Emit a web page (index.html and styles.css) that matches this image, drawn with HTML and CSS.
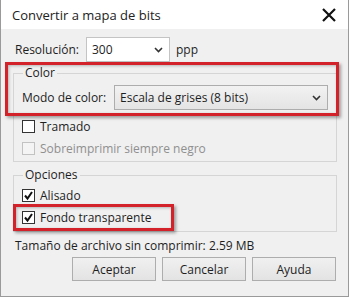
FILE: index.html
```html
<!DOCTYPE html>
<html>
    <head>
        <meta charset="utf-8">
        <link rel="stylesheet" href="styles.css">
    </head>
    <body>
        <div class="window">
            <header class="titlebar">
                <span class="title">Convertir a mapa de bits</span>
                <svg class="close" width="14" height="14" viewBox="0 0 14 14">
                    <path d="M1 1 L13 13 M13 1 L1 13" stroke="#111" stroke-width="2.2" fill="none"/>
                </svg>
            </header>

            <div class="content">
                <div class="res-row">
                    <span class="label">Resolución:</span>
                    <div class="combo combo-res">
                        <span>300</span>
                        <svg class="chev" width="9" height="6" viewBox="0 0 9 6"><path d="M1 1 L4.5 4.5 L8 1" stroke="#333" stroke-width="1.6" fill="none"/></svg>
                    </div>
                    <span class="unit">ppp</span>
                </div>

                <fieldset class="group group-color">
                    <legend>Color</legend>
                    <div class="mode-row">
                        <span class="label">Modo de color:</span>
                        <div class="combo combo-mode">
                            <span>Escala de grises (8 bits)</span>
                            <svg class="chev" width="9" height="6" viewBox="0 0 9 6"><path d="M1 1 L4.5 4.5 L8 1" stroke="#333" stroke-width="1.6" fill="none"/></svg>
                        </div>
                    </div>
                    <div class="check-row">
                        <span class="box"></span>
                        <span>Tramado</span>
                    </div>
                    <div class="check-row disabled">
                        <span class="box"></span>
                        <span>Sobreimprimir siempre negro</span>
                    </div>
                </fieldset>

                <fieldset class="group group-options">
                    <legend>Opciones</legend>
                    <div class="check-row">
                        <span class="box checked"><svg width="11" height="11" viewBox="0 0 11 11"><path d="M2 5.5 L4.5 8.5 L9 2" stroke="#111" stroke-width="2" fill="none"/></svg></span>
                        <span>Alisado</span>
                    </div>
                    <div class="check-row">
                        <span class="box checked"><svg width="11" height="11" viewBox="0 0 11 11"><path d="M2 5.5 L4.5 8.5 L9 2" stroke="#111" stroke-width="2" fill="none"/></svg></span>
                        <span>Fondo transparente</span>
                    </div>
                </fieldset>

                <p class="size-info">Tamaño de archivo sin comprimir: 2.59 MB</p>

                <div class="buttons">
                    <button>Aceptar</button>
                    <button>Cancelar</button>
                    <button>Ayuda</button>
                </div>
            </div>

            <!-- red highlight marks -->
            <div class="mark mark-color"></div>
            <div class="mark mark-bg"></div>
        </div>
    </body>
</html>
```

FILE: styles.css
```css
body {
    margin: 0;
    background: #fff;
    font-family: "Open Sans", "Noto Sans", sans-serif;
    font-size: 12px;
    color: #1e1e1e;
}
.window {
    position: relative;
    box-sizing: border-box;
    width: 349px;
    height: 297px;
    border: 1px solid #9a9a9a;
    border-top: none;
    background: #f0f0f0;
}
.titlebar {
    display: flex;
    justify-content: space-between;
    align-items: center;
    height: 29px;
    padding: 0 11px 0 11px;
    background: #fff;
}
.title {
    font-size: 13px;
    color: #222;
    padding-top: 1px;
}
.close {
    margin-right: 1px;
    margin-top: 1px;
}
.content {
    padding-top: 8px;
}
.res-row {
    display: flex;
    align-items: center;
    height: 25px;
    padding-left: 14px;
}
.res-row .label {
    width: 71px;
}
.combo {
    box-sizing: border-box;
    display: flex;
    justify-content: space-between;
    align-items: center;
    height: 25px;
    border: 1px solid #adadad;
    padding: 0 6px 0 5px;
}
.combo-res {
    width: 84px;
    background: #fff;
    border-color: #c4c4c4;
}
.unit {
    margin-left: 6px;
}
.group {
    margin: 3px 11px 0 12px;
    border: 1px solid #d5d5d5;
    padding: 0 8px 2px 8px;
}
.group legend {
    padding: 0 2px;
    margin-left: 1px;
    line-height: 16px;
}
.group-color {
    padding-top: 0;
}
.mode-row {
    display: flex;
    align-items: center;
    margin: 4px 0 5px 0;
}
.mode-row .label {
    width: 92px;
}
.combo-mode {
    flex: 1;
    background: linear-gradient(#f2f2f2, #e4e4e4);
}
.check-row {
    display: flex;
    align-items: center;
    height: 22px;
}
.box {
    box-sizing: border-box;
    display: flex;
    align-items: center;
    justify-content: center;
    width: 13px;
    height: 13px;
    border: 1px solid #333;
    background: #fff;
    margin-right: 5px;
}
.disabled {
    color: #8f8f8f;
}
.disabled .box {
    border-color: #c2c2c2;
    background: #f4f4f4;
}
.group-options {
    margin-top: 5px;
    padding-top: 1px;
    padding-bottom: 3px;
}
.size-info {
    margin: 6px 0 0 14px;
    line-height: 16px;
}
.buttons {
    display: flex;
    justify-content: flex-end;
    gap: 6px;
    margin: 3px 12px 0 0;
}
.buttons button {
    width: 84px;
    height: 24px;
    border: 1px solid #adadad;
    background: linear-gradient(#f0f0f0, #e3e3e3);
    font-family: inherit;
    font-size: 12px;
    color: #1e1e1e;
    padding: 0;
}
.mark {
    position: absolute;
    border: 3px solid #d3222a;
    box-shadow: 2px 2px 3px rgba(0, 0, 0, 0.35), inset 1px 1px 3px rgba(0, 0, 0, 0.25);
}
.mark-color {
    left: 4px;
    top: 62px;
    width: 328px;
    height: 48px;
}
.mark-bg {
    left: 12px;
    top: 204px;
    width: 155px;
    height: 21px;
}
```
